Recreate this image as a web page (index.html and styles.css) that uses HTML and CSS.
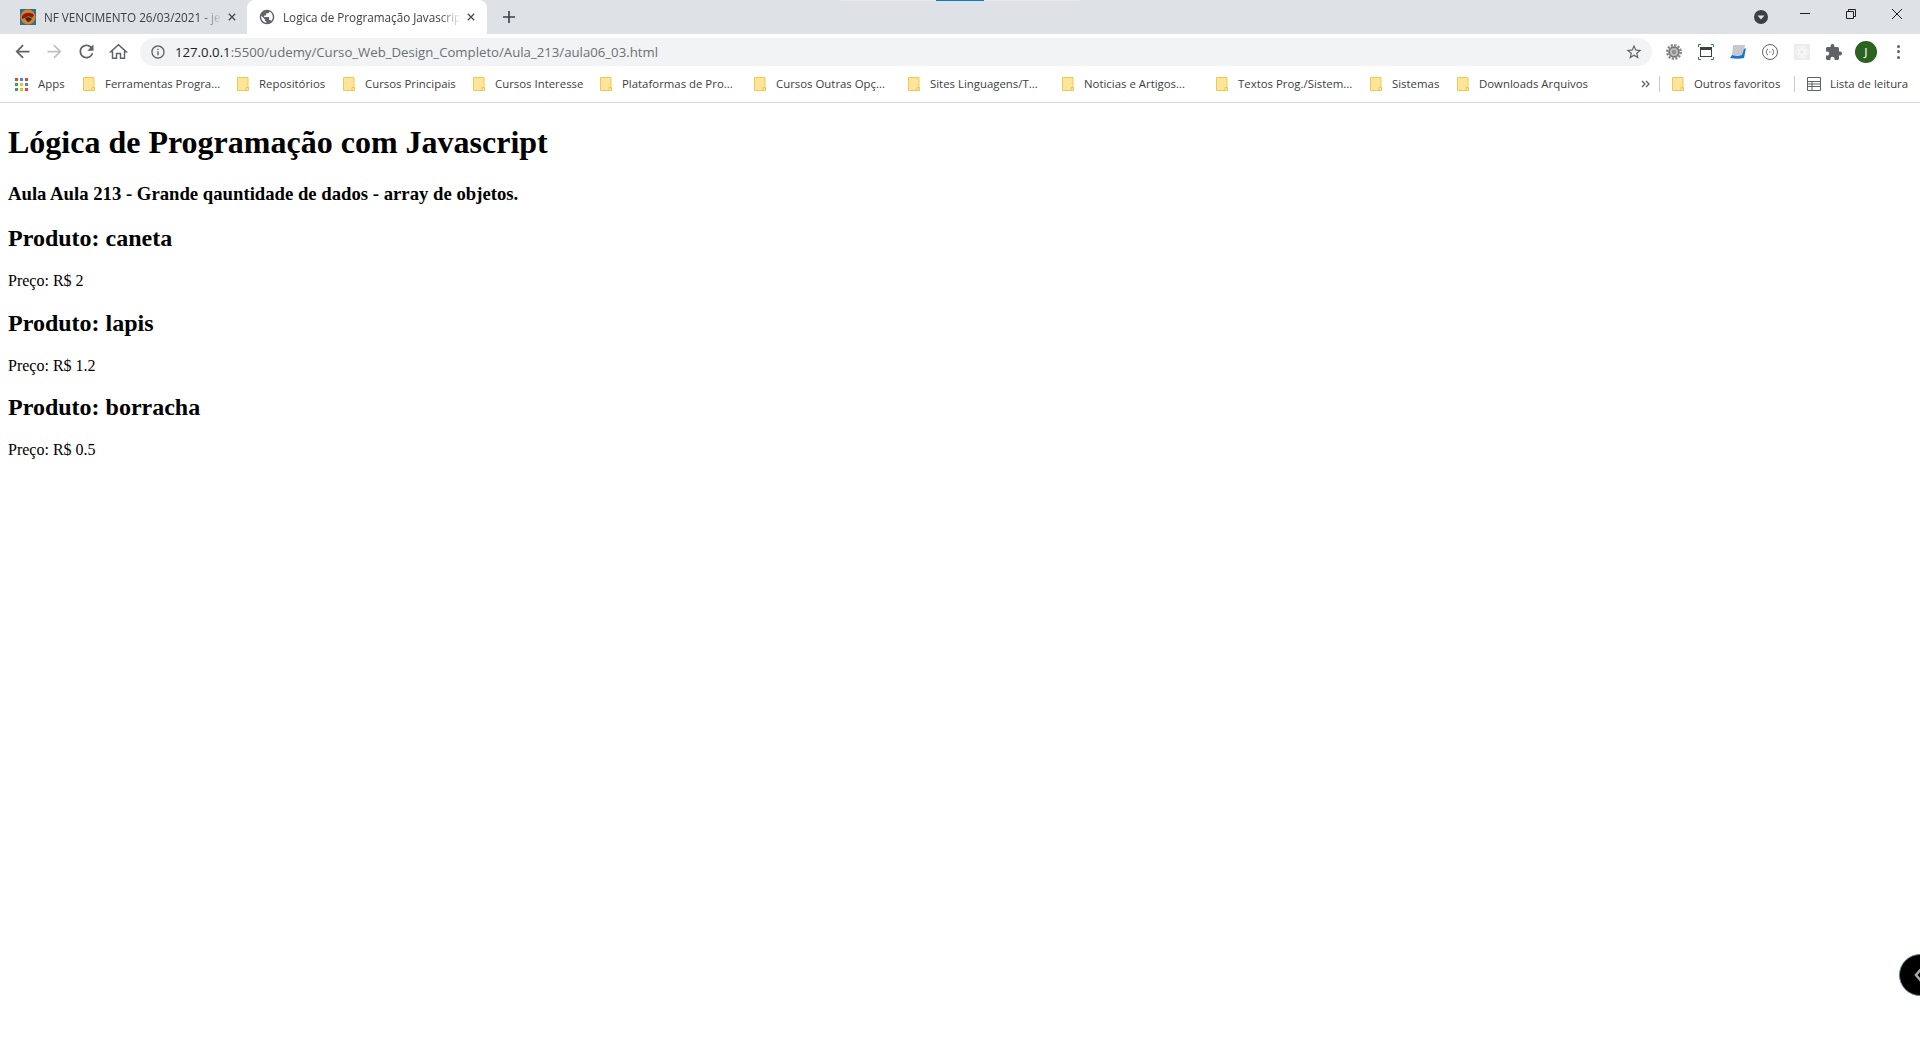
FILE: index.html
```html
<!DOCTYPE html>
<html lang="pt-BR">

<head>
    <meta charset="UTF-8" />
    <title>Logica de Programação Javascript</title>
    <link rel="stylesheet" href="styles.css">
</head>

<body>
    <svg class="sprite" width="0" height="0">
        <symbol id="folder" viewBox="0 0 12 14">
            <path d="M.5.5h10.500v13H.5z" fill="#fee59b" stroke="#f2c94c" />
            <path d="M9 10.500h2.500v3H9z" fill="#fee59b" stroke="#f2c94c" />
        </symbol>
    </svg>

    <header class="browser">
        <div class="tabstrip">
            <div class="top-strip"><span class="top-strip-blue"></span></div>
            <div class="tab">
                <svg class="favicon" viewBox="0 0 16 16">
                    <rect width="16" height="16" fill="#2b6f8f" />
                    <circle cx="8" cy="8" r="7.500" fill="#d9822b" />
                    <path d="M2 7c3-4 9-4 12-1l-2 3c-2-2-5-2-7 0l-3 1z" fill="#8a1c12" />
                    <path d="M5 9c2-1 5-1 7 1l-3 3c-2 0-3-2-4-4z" fill="#3a2a1a" />
                </svg>
                <span class="tab-title">NF VENCIMENTO 26/03/2021 - je</span>
                <svg class="tab-close" viewBox="0 0 10 10"><path d="M1 1l8 8M9 1L1 9" /></svg>
            </div>
            <div class="tab tab-active">
                <svg class="favicon" viewBox="1 1 22 22"><path fill="#5f6368" d="M12 2C6.480 2 2 6.480 2 12s4.480 10 10 10 10-4.480 10-10S17.520 2 12 2zm-1 17.930c-3.950-.49-7-3.850-7-7.930 0-.62.08-1.210.21-1.790L9 15v1c0 1.100.9 2 2 2v1.930zm6.900-2.540c-.26-.81-1-1.390-1.900-1.390h-1v-3c0-.55-.45-1-1-1H8v-2h2c.55 0 1-.45 1-1V7h2c1.100 0 2-.9 2-2v-.41c2.930 1.190 5 4.060 5 7.410 0 2.080-.8 3.970-2.100 5.390z" /></svg>
                <span class="tab-title">Logica de Programação Javascrip</span>
                <svg class="tab-close" viewBox="0 0 10 10"><path d="M1 1l8 8M9 1L1 9" /></svg>
            </div>
            <svg class="new-tab" viewBox="0 0 12 12"><path d="M6 0v12M0 6h12" /></svg>
            <div class="window-actions">
                <svg class="profile-menu" viewBox="0 0 14 14">
                    <circle cx="7" cy="7" r="7" fill="#3c4043" />
                    <path d="M3.500 5.500h7L7 9.500z" fill="#dee1e6" />
                </svg>
                <svg class="win-btn" viewBox="0 0 10 10"><path d="M0 4.500h10" /></svg>
                <svg class="win-btn" viewBox="0 0 10 10"><path d="M.5 2.500h7v7h-7zM2.500 2.500v-2h7v7h-2" /></svg>
                <svg class="win-btn" viewBox="0 0 10 10"><path d="M0 0l10 10M10 0L0 10" /></svg>
            </div>
        </div>

        <div class="toolbar">
            <svg class="tool-icon" viewBox="0 0 24 24"><path d="M20 11H7.830l5.590-5.590L12 4l-8 8 8 8 1.410-1.410L7.830 13H20v-2z" /></svg>
            <svg class="tool-icon tool-off" viewBox="0 0 24 24"><path d="M12 4l-1.410 1.410L16.170 11H4v2h12.170l-5.580 5.590L12 20l8-8z" /></svg>
            <svg class="tool-icon" viewBox="0 0 24 24"><path d="M17.650 6.350A7.958 7.958 0 0 0 12 4c-4.420 0-7.990 3.580-7.990 8s3.570 8 7.990 8c3.730 0 6.840-2.550 7.730-6h-2.080A5.990 5.990 0 0 1 12 18c-3.310 0-6-2.690-6-6s2.690-6 6-6c1.660 0 3.140.69 4.220 1.780L13 11h7V4l-2.350 2.350z" /></svg>
            <svg class="tool-icon tool-home" viewBox="-1.125 -1.125 26.250 26.250"><path d="M9.500 20.500v-6h5v6h5v-8h2.300L12 3.500 2.200 12.500h2.300v8z" /></svg>
            <div class="omnibox">
                <svg class="omni-info" viewBox="0 0 24 24"><path d="M11 7h2v2h-2zm0 4h2v6h-2zm1-9C6.480 2 2 6.480 2 12s4.480 10 10 10 10-4.480 10-10S17.520 2 12 2zm0 18c-4.410 0-8-3.590-8-8s3.590-8 8-8 8 3.590 8 8-3.590 8-8 8z" /></svg>
                <span class="url"><b>127.0.0.1</b>:5500/udemy/Curso_Web_Design_Completo/Aula_213/aula06_03.html</span>
                <svg class="omni-star" viewBox="0 0 24 24"><path d="M22 9.240l-7.190-.62L12 2 9.190 8.630 2 9.240l5.460 4.730L5.820 21 12 17.270 18.180 21l-1.630-7.030L22 9.240zM12 15.400l-3.760 2.270 1-4.280-3.320-2.880 4.380-.38L12 6.100l1.710 4.040 4.380.38-3.320 2.880 1 4.280L12 15.400z" /></svg>
            </div>
            <div class="extensions">
                <svg class="ext" viewBox="0 0 16 16">
                    <circle cx="8" cy="8" r="6.800" fill="none" stroke="#8a8a8a" stroke-width="2.400" stroke-dasharray="2.200 1.360" />
                    <circle cx="8" cy="8" r="5.800" fill="#777" />
                    <circle cx="8" cy="8" r="4" fill="#bdbdbd" />
                    <circle cx="8" cy="8" r="2.200" fill="#8f8f8f" />
                </svg>
                <svg class="ext" viewBox="0 0 16 16">
                    <path d="M.5 3V.5H3M13 .5h2.500V3M15.500 13v2.500H13M3 15.500H.5V13" fill="none" stroke="#1e8e3e" />
                    <rect x="2.500" y="3.500" width="11" height="9" fill="#fff" stroke="#3c4043" />
                    <path d="M3 4h10v2H3z" fill="#3c4043" />
                </svg>
                <svg class="ext" viewBox="0 0 16 16">
                    <path d="M3 1h12l-2 10H2z" fill="#c5c9cf" />
                    <path d="M14 5l2-1-2 10c-4 1-9 1-14 0l2-3c4 1 7 1 10 0z" fill="#1976c4" />
                </svg>
                <svg class="ext" viewBox="0 0 16 16">
                    <circle cx="8" cy="8" r="7.500" fill="#fff" stroke="#5f6368" />
                    <path d="M6 5C4.500 5 5 7.500 4 8c1 .5.5 3 2 3M10 5c1.500 0 1 2.500 2 3-1 .5-.5 3-2 3" fill="none" stroke="#5f6368" />
                    <path d="M7 8h.8M8.500 8h.8" stroke="#5f6368" />
                </svg>
                <svg class="ext" viewBox="0 0 16 16">
                    <rect width="16" height="16" fill="#ececec" />
                    <g fill="none" stroke="#fafafa">
                        <ellipse cx="8" cy="8" rx="6.500" ry="2.500" />
                        <ellipse cx="8" cy="8" rx="6.500" ry="2.500" transform="rotate(60 8 8)" />
                        <ellipse cx="8" cy="8" rx="6.500" ry="2.500" transform="rotate(120 8 8)" />
                    </g>
                </svg>
                <svg class="ext" viewBox="2 1 21 21"><path fill="#5f6368" d="M20.500 11H19V7c0-1.100-.9-2-2-2h-4V3.500C13 2.120 11.880 1 10.500 1S8 2.120 8 3.500V5H4c-1.100 0-1.990.9-1.990 2v3.800H3.500c1.490 0 2.700 1.210 2.700 2.700s-1.210 2.700-2.700 2.700H2V20c0 1.100.9 2 2 2h3.800v-1.500c0-1.490 1.210-2.700 2.700-2.700 1.490 0 2.700 1.210 2.700 2.700V22H17c1.100 0 2-.9 2-2v-4h1.500c1.380 0 2.500-1.120 2.500-2.500S21.880 11 20.500 11z" /></svg>
                <span class="avatar">J</span>
                <span class="kebab"><i></i><i></i><i></i></span>
            </div>
        </div>

        <nav class="bookmarks">
            <a class="bm bm-apps">
                <svg class="apps-grid" viewBox="0 0 13 13">
                    <path fill="#ea4335" d="M0 0h3v3H0z" /><path fill="#4285f4" d="M5 0h3v3H5z" /><path fill="#ea4335" d="M10 0h3v3h-3z" />
                    <path fill="#34a853" d="M0 5h3v3H0z" /><path fill="#fbbc05" d="M5 5h3v3H5z" /><path fill="#4285f4" d="M10 5h3v3h-3z" />
                    <path fill="#34a853" d="M0 10h3v3H0z" /><path fill="#fbbc05" d="M5 10h3v3H5z" /><path fill="#ea4335" d="M10 10h3v3h-3z" />
                </svg>
                Apps
            </a>
            <a class="bm bm-long"><svg class="folder"><use href="#folder" /></svg>Ferramentas Progra...</a>
            <a class="bm bm-repos"><svg class="folder"><use href="#folder" /></svg>Repositórios</a>
            <a class="bm bm-principais"><svg class="folder"><use href="#folder" /></svg>Cursos Principais</a>
            <a class="bm bm-interesse"><svg class="folder"><use href="#folder" /></svg>Cursos Interesse</a>
            <a class="bm bm-long"><svg class="folder"><use href="#folder" /></svg>Plataformas de Pro...</a>
            <a class="bm bm-long"><svg class="folder"><use href="#folder" /></svg>Cursos Outras Opç...</a>
            <a class="bm bm-long"><svg class="folder"><use href="#folder" /></svg>Sites Linguagens/T...</a>
            <a class="bm bm-long"><svg class="folder"><use href="#folder" /></svg>Noticias e Artigos...</a>
            <a class="bm bm-long"><svg class="folder"><use href="#folder" /></svg>Textos Prog./Sistem...</a>
            <a class="bm bm-sistemas"><svg class="folder"><use href="#folder" /></svg>Sistemas</a>
            <a class="bm"><svg class="folder"><use href="#folder" /></svg>Downloads Arquivos</a>
            <div class="bm-right">
                <svg class="bm-more" viewBox="0 0 9 8"><path d="M1 1l3 3-3 3M5 1l3 3-3 3" /></svg>
                <span class="bm-sep"></span>
                <a class="bm bm-other"><svg class="folder"><use href="#folder" /></svg>Outros favoritos</a>
                <span class="bm-sep"></span>
                <a class="bm bm-list">
                    <svg class="list-icon" viewBox="0 0 14 14">
                        <path d="M.5.5h13v13H.5zM.5 4.500h13M.5 7h13M.5 9.500h13M5 4.500v9" />
                    </svg>
                    Lista de leitura
                </a>
            </div>
        </nav>
    </header>

    <main class="page">
        <h1>Lógica de Programação com Javascript</h1>
        <h3>Aula Aula 213 - Grande qauntidade de dados - array de objetos.</h3>
        <h2>Produto: caneta</h2>
        <p>Preço: R$ 2</p>
        <h2>Produto: lapis</h2>
        <p>Preço: R$ 1.2</p>
        <h2>Produto: borracha</h2>
        <p>Preço: R$ 0.5</p>
    </main>

    <div class="float-btn">
        <svg viewBox="0 0 10 16"><path d="M8 1L2 8l6 7" /></svg>
    </div>
</body>

</html>
```

FILE: styles.css
```css
html,
body {
    height: 100%;
    overflow: hidden;
}

body {
    margin: 0;
    background: #fff;
    color: #000;
    font-family: "Liberation Serif", serif;
}

.sprite {
    position: absolute;
}

/* Barra de abas */
.browser {
    font-family: "Open Sans", sans-serif;
    color: #3c4043;
}

.tabstrip {
    position: relative;
    display: flex;
    align-items: flex-end;
    height: 34px;
    padding-left: 8px;
    background: #dee1e6;
}

.top-strip {
    position: absolute;
    top: 0;
    left: 840px;
    display: flex;
    justify-content: center;
    width: 240px;
    height: 1px;
    background: #e8e8e8;
}

.top-strip-blue {
    width: 48px;
    background: #0a7cd6;
}

.tab {
    display: flex;
    align-items: center;
    width: 239px;
    height: 34px;
    padding: 0 11px 0 12px;
    box-sizing: border-box;
    font-size: 11.700px;
}

.tab-active {
    width: 240px;
    padding-right: 12px;
    background: #fff;
    border-radius: 8px 8px 0 0;
}

.favicon {
    flex: none;
    width: 16px;
    height: 16px;
    margin-right: 8px;
}

.tab-title {
    flex: 1;
    min-width: 0;
    white-space: nowrap;
    -webkit-mask-image: linear-gradient(to right, #000 88%, transparent);
    mask-image: linear-gradient(to right, #000 88%, transparent);
}

.tab-close {
    flex: none;
    width: 8px;
    height: 8px;
    margin-left: 6px;
    fill: none;
    stroke: #45494d;
    stroke-width: 1.600;
}

.new-tab {
    align-self: center;
    width: 12px;
    height: 12px;
    margin-left: 16px;
    fill: none;
    stroke: #3c4043;
    stroke-width: 1.600;
}

.window-actions {
    display: flex;
    align-items: flex-start;
    height: 100%;
    margin-left: auto;
}

.profile-menu {
    width: 14px;
    height: 14px;
    margin: 10px 32px 0 0;
}

.win-btn {
    width: 10px;
    height: 10px;
    margin: 9px 36px 0 0;
    fill: none;
    stroke: #1f1f1f;
}

.win-btn:last-child {
    margin-right: 18px;
}

/* Barra de ferramentas */
.toolbar {
    display: flex;
    align-items: center;
    height: 35px;
    padding-left: 12px;
    background: #fff;
}

.tool-icon {
    width: 21px;
    height: 21px;
    margin-right: 11px;
    fill: #5f6368;
}

.tool-off {
    fill: #bdc1c6;
}

.tool-home {
    fill: none;
    stroke: #5f6368;
    stroke-width: 1.800;
}

.omnibox {
    display: flex;
    align-items: center;
    width: 1512px;
    height: 28px;
    padding: 0 9px 0 10px;
    box-sizing: border-box;
    background: #f1f3f4;
    border-radius: 14px;
}

.omni-info {
    width: 16px;
    height: 16px;
    margin-right: 9px;
    fill: #5f6368;
}

.url {
    flex: 1;
    font-size: 13.200px;
    color: #6c7074;
    white-space: nowrap;
}

.url b {
    font-weight: 400;
    color: #202124;
}

.omni-star {
    width: 18px;
    height: 18px;
    fill: #5f6368;
}

.extensions {
    display: flex;
    align-items: center;
    margin-left: 14px;
}

.ext {
    width: 16px;
    height: 16px;
    margin-right: 16px;
}

.avatar {
    display: flex;
    align-items: center;
    justify-content: center;
    width: 22px;
    height: 22px;
    margin-left: -3px;
    background: #2b6320;
    border-radius: 50%;
    color: #e6efe4;
    font-size: 11px;
    font-weight: 600;
}

.kebab {
    display: flex;
    flex-direction: column;
    gap: 2.500px;
    margin-left: 20px;
}

.kebab i {
    width: 3px;
    height: 3px;
    background: #5f6368;
    border-radius: 50%;
}

/* Favoritos */
.bookmarks {
    display: flex;
    align-items: center;
    height: 30px;
    padding: 0 0 3px 14px;
    background: #fff;
    border-bottom: 1px solid #d3d5d8;
    font-size: 11.400px;
}

.bm {
    display: flex;
    align-items: center;
    flex: none;
    padding-bottom: 2px;
    box-sizing: border-box;
    white-space: nowrap;
}

.folder {
    flex: none;
    width: 12px;
    height: 14px;
    margin: 2px 10px 0 0;
}

.bm-apps {
    width: 69px;
    padding-left: 1px;
}

.apps-grid {
    width: 13px;
    height: 13px;
    margin: 2px 10px 0 0;
}

.bm-long {
    width: 154px;
}

.bm-repos {
    width: 106px;
}

.bm-principais {
    width: 130px;
}

.bm-interesse {
    width: 127px;
}

.bm-sistemas {
    width: 87px;
}

.bm-right {
    display: flex;
    align-items: center;
    margin-left: auto;
}

.bm-more {
    width: 9px;
    height: 8px;
    margin-right: 9px;
    fill: none;
    stroke: #5f6368;
    stroke-width: 1.300;
}

.bm-sep {
    width: 1px;
    height: 16px;
    background: #c8cacd;
}

.bm-other {
    width: 134px;
    padding-left: 12px;
}

.bm-list {
    width: 125px;
    padding-left: 12px;
}

.list-icon {
    width: 14px;
    height: 14px;
    margin: 2px 9px 0 0;
    fill: none;
    stroke: #5f6368;
}

/* Conteudo da pagina */
.page {
    padding: 0 8px;
}

/* Botao flutuante */
.float-btn {
    position: absolute;
    top: 954px;
    left: 1899px;
    display: flex;
    align-items: center;
    width: 42px;
    height: 42px;
    padding-left: 14px;
    box-sizing: border-box;
    background: #000;
    border: 1px solid #5d7f8c;
    border-radius: 50%;
}

.float-btn svg {
    width: 10px;
    height: 16px;
    fill: none;
    stroke: #aaa;
    stroke-width: 2.500;
}
```
